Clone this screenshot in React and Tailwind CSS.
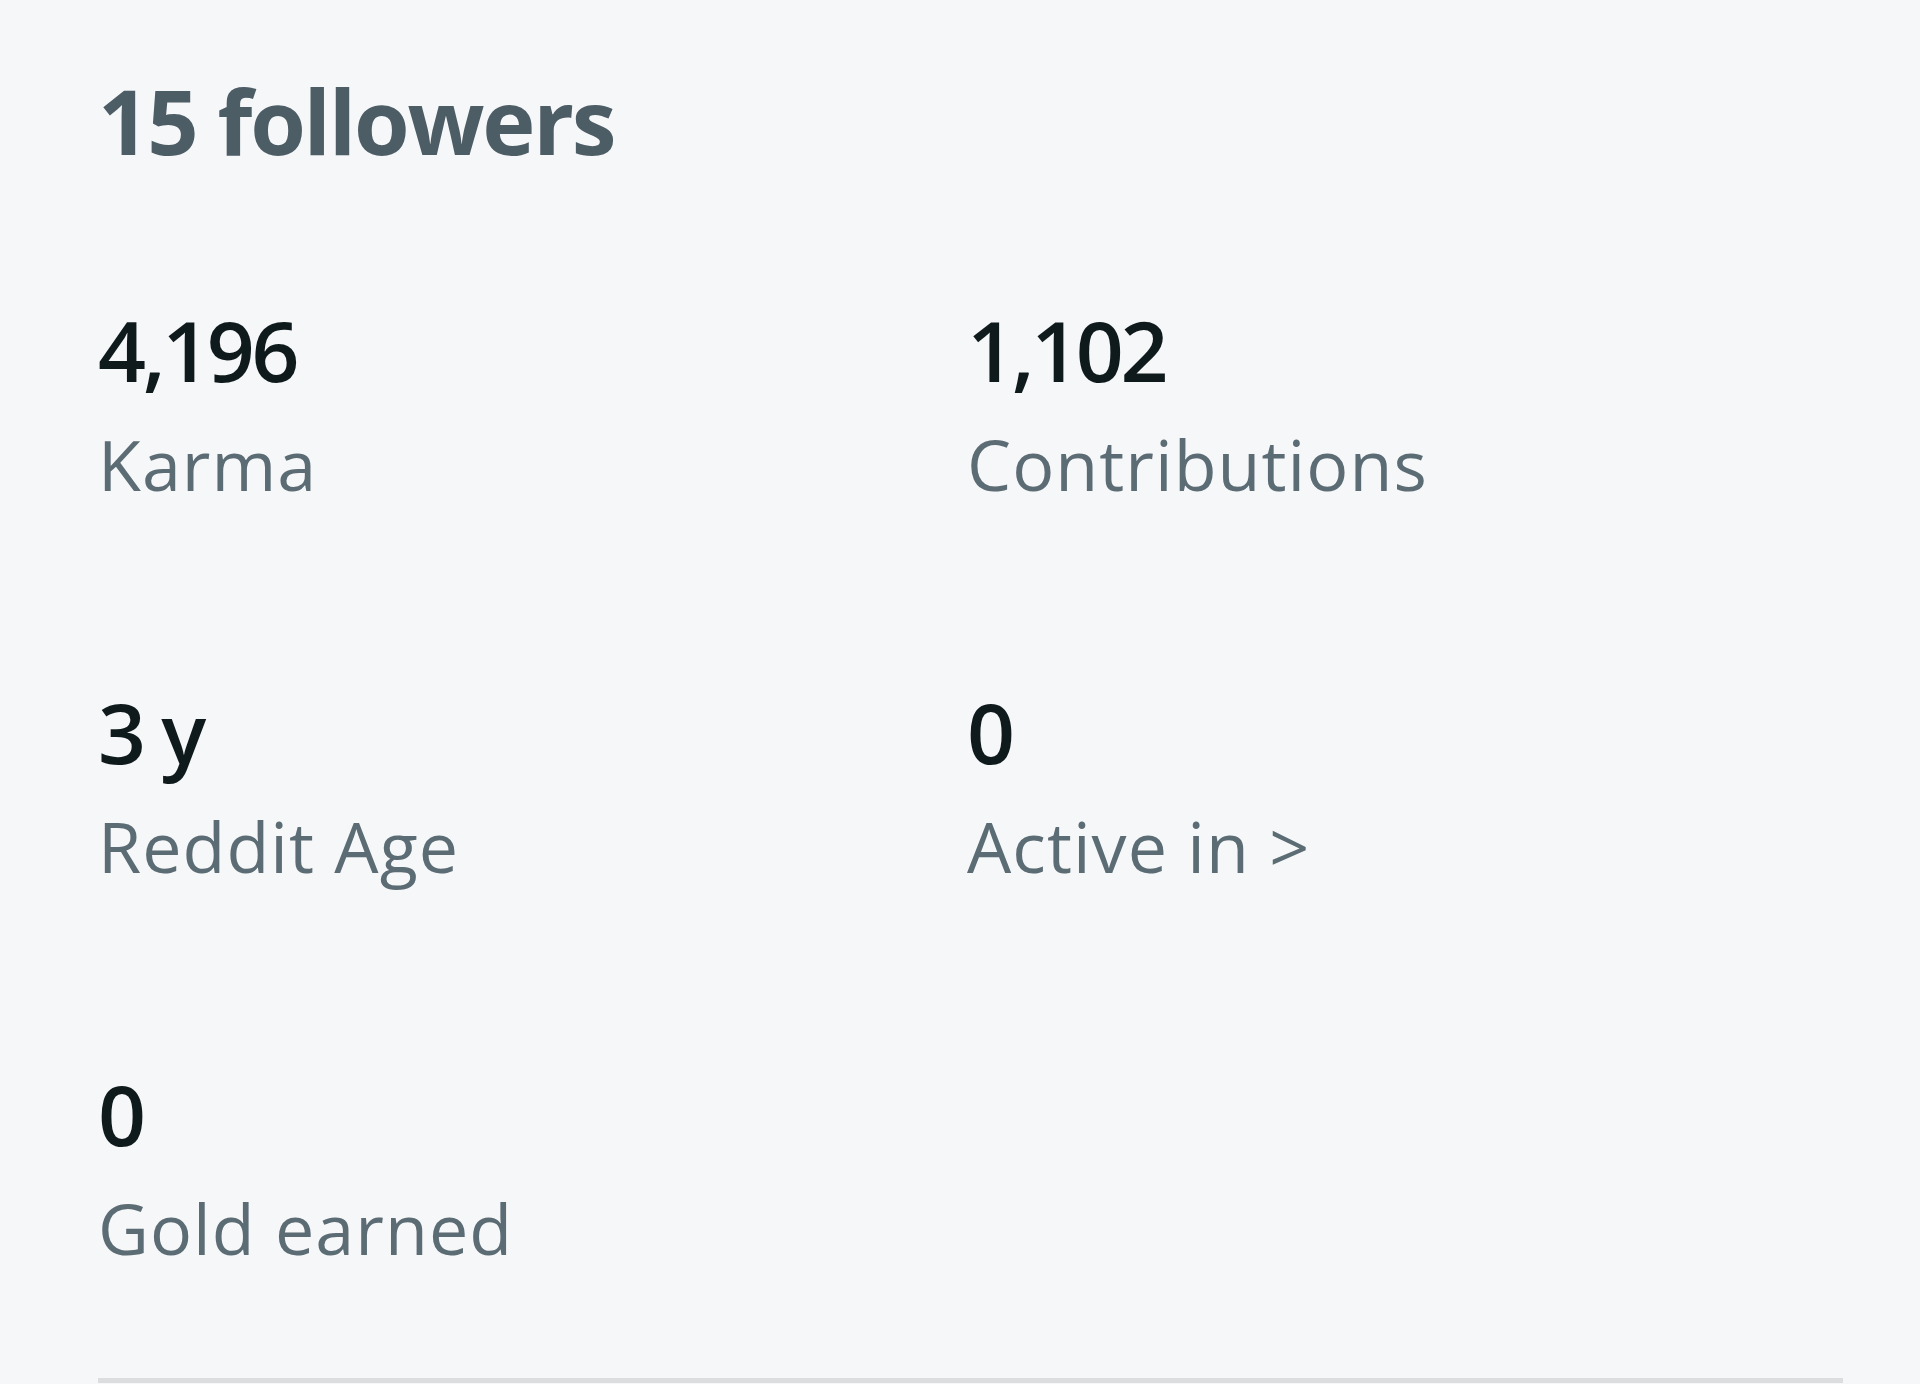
import React from 'react'

const stats = [
  { value: '4,196', label: 'Karma' },
  { value: '1,102', label: 'Contributions' },
  { value: '3 y', label: 'Reddit Age' },
  { value: '0', label: 'Active in >' },
  { value: '0', label: 'Gold earned' },
]

function Stat({ value, label }) {
  return (
    <div className="flex flex-col">
      <span className="text-[84px] leading-none font-semibold tracking-[-0.04em] text-[#0f1a1c]">{value}</span>
      <span className="mt-[37px] text-[70px] leading-none tracking-[0.015em] text-[#5c6c74]">{label}</span>
    </div>
  )
}

export default function App() {
  return (
    <div
      className="min-h-[1384px] w-[1920px] bg-[#f6f7f8] pl-[98px] pr-[77px] pt-[75px] overflow-hidden"
      style={{ fontFamily: '"Open Sans", "Noto Sans", sans-serif' }}
    >
      <h2 className="text-[90px] leading-none font-bold tracking-[-0.025em] text-[#4d5d65]">15 followers</h2>
      <div className="mt-[143px] grid grid-cols-[869px_1fr] gap-y-[191px]">
        {stats.map((s) => (
          <Stat key={s.label} value={s.value} label={s.label} />
        ))}
      </div>
      <div className="mt-[115px] h-[5px] bg-[#dcdddf]" />
    </div>
  )
}
